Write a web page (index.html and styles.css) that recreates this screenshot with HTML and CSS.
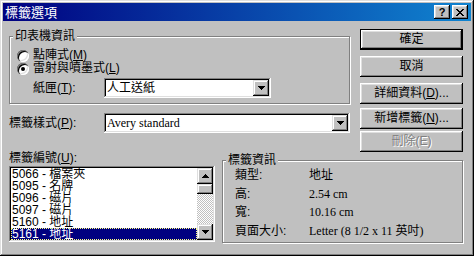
FILE: index.html
```html
<!DOCTYPE html>
<html lang="zh-Hant">
<head>
<meta charset="utf-8">
<title>標籤選項</title>
<link rel="stylesheet" href="styles.css">
</head>
<body>
<div class="window">
  <div class="titlebar">
    <span class="title">標籤選項</span>
    <div class="tb-buttons">
      <span class="tb-btn help">?</span>
      <span class="tb-btn close"><svg width="8" height="7" viewBox="0 0 8 7" shape-rendering="crispEdges"><path d="M0 0h2v1H0zM6 0h2v1H6zM1 1h2v1H1zM5 1h2v1H5zM2 2h4v1H2zM3 3h2v1H3zM2 4h4v1H2zM1 5h2v1H1zM5 5h2v1H5zM0 6h2v1H0zM6 6h2v1H6z" fill="#000"/></svg></span>
    </div>
  </div>
  <div class="content">
    <div class="row-top">
      <div class="col-left">
        <fieldset class="group printer">
          <legend>印表機資訊</legend>
          <div class="radio-row"><span class="radio"></span><span>點陣式(<u>M</u>)</span></div>
          <div class="radio-row"><span class="radio checked"></span><span>雷射與噴墨式(<u>L</u>)</span></div>
          <div class="field-row tray-row">
            <span class="field-label tray-label">紙匣(<u>T</u>):</span>
            <div class="combo tray-combo">
              <span class="combo-text">人工送紙</span>
              <span class="drop"><svg width="7" height="4" viewBox="0 0 7 4" shape-rendering="crispEdges"><path d="M0 0h7v1H0zM1 1h5v1H1zM2 2h3v1H2zM3 3h1v1H3z" fill="#000"/></svg></span>
            </div>
          </div>
        </fieldset>
        <div class="field-row style-row">
          <span class="field-label style-label">標籤樣式(<u>P</u>):</span>
          <div class="combo style-combo">
            <span class="combo-text serif">Avery standard</span>
            <span class="drop"><svg width="7" height="4" viewBox="0 0 7 4" shape-rendering="crispEdges"><path d="M0 0h7v1H0zM1 1h5v1H1zM2 2h3v1H2zM3 3h1v1H3z" fill="#000"/></svg></span>
          </div>
        </div>
      </div>
      <div class="buttons">
        <div class="btn default gap6">確定</div>
        <div class="btn gap6">取消</div>
        <div class="btn gap4">詳細資料(<u>D</u>)...</div>
        <div class="btn gap2">新增標籤(<u>N</u>)...</div>
        <div class="btn disabled">刪除(E)</div>
      </div>
    </div>
    <div class="row-bottom">
      <div class="list-col">
        <div class="list-label">標籤編號(<u>U</u>):</div>
        <div class="listbox">
          <ul class="items">
            <li>5066 - 檔案夾</li>
            <li>5095 - 名牌</li>
            <li>5096 - 磁片</li>
            <li>5097 - 磁片</li>
            <li>5160 - 地址</li>
            <li class="selected">5161 - 地址</li>
          </ul>
          <div class="vscroll">
            <span class="sb-btn"><svg width="7" height="4" viewBox="0 0 7 4" shape-rendering="crispEdges"><path d="M3 0h1v1H3zM2 1h3v1H2zM1 2h5v1H1zM0 3h7v1H0z" fill="#000"/></svg></span>
            <span class="sb-thumb"></span>
            <span class="sb-track"></span>
            <span class="sb-btn"><svg width="7" height="4" viewBox="0 0 7 4" shape-rendering="crispEdges"><path d="M0 0h7v1H0zM1 1h5v1H1zM2 2h3v1H2zM3 3h1v1H3z" fill="#000"/></svg></span>
          </div>
        </div>
      </div>
      <fieldset class="group info">
        <legend>標籤資訊</legend>
        <dl class="info-grid">
          <dt>類型:</dt><dd>地址</dd>
          <dt>高:</dt><dd>2.54 cm</dd>
          <dt>寬:</dt><dd>10.16 cm</dd>
          <dt>頁面大小:</dt><dd>Letter (8 1/2 x 11 英吋)</dd>
        </dl>
      </fieldset>
    </div>
  </div>
</div>
</body>
</html>
```

FILE: styles.css
```css
* { box-sizing: border-box; }
html, body { margin: 0; padding: 0; background: #c0c0c0; }
body {
  width: 474px;
  height: 256px;
  overflow: hidden;
  font: 12px/13px "Liberation Sans", "Noto Sans CJK TC", sans-serif;
  color: #000;
}
u { text-decoration: underline; text-underline-offset: 1px; }

.window {
  width: 474px;
  height: 256px;
  padding: 3px;
  background: #c0c0c0;
  box-shadow: inset -1px -1px #000, inset 1px 1px #dfdfdf, inset -2px -2px #808080, inset 2px 2px #fff;
}

.titlebar {
  height: 18px;
  display: flex;
  align-items: center;
  justify-content: space-between;
  padding: 0 3px 0 2px;
  background: linear-gradient(90deg, #000080 0%, #1084d0 100%);
  color: #fff;
}
.title {
  font-family: "Noto Sans CJK TC", sans-serif;
  font-size: 13px;
  line-height: 18px;
}
.tb-buttons { display: flex; gap: 2px; }
.tb-btn {
  width: 16px;
  height: 14px;
  display: flex;
  align-items: center;
  justify-content: center;
  background: #c0c0c0;
  color: #000;
  box-shadow: inset -1px -1px #000, inset 1px 1px #fff, inset -2px -2px #808080, inset 2px 2px #dfdfdf;
}
.tb-btn.help {
  font: bold 11px/14px "Liberation Sans", sans-serif;
  padding-top: 0;
}
.tb-btn svg { display: block; }

.content { padding: 8px 8px 0 6px; }

.row-top { display: flex; gap: 9px; align-items: flex-start; }
.col-left { width: 342px; }

fieldset.group {
  margin: 0;
  border: 1px solid #808080;
  box-shadow: 1px 1px #fff, inset 1px 1px #fff;
  min-width: 0;
}
fieldset.group legend {
  padding: 0 2px;
  line-height: 12px;
  background: #c0c0c0;
}

.printer {
  width: 341px;
  margin-top: 1px !important;
  padding: 7px 0 5px 7px;
}
.printer legend { margin-left: -4px; }

.radio-row {
  display: flex;
  align-items: center;
  gap: 4px;
  height: 13px;
}
.radio {
  position: relative;
  width: 12px;
  height: 12px;
  border-radius: 50%;
  background: #fff;
  box-shadow: inset 1px 1px #808080, inset 2px 2px #000, inset -1px -1px #fff, inset -2px -2px #dfdfdf;
  flex: none;
}
.radio.checked::after {
  content: "";
  position: absolute;
  left: 4px;
  top: 4px;
  width: 4px;
  height: 4px;
  border-radius: 50%;
  background: #000;
}

.field-row { display: flex; align-items: center; }
.tray-row { margin-top: 3px; padding-left: 16px; }
.tray-label { width: 71px; }
.style-row { margin-top: 9px; }
.style-label { width: 95px; }

.combo {
  height: 20px;
  display: flex;
  align-items: center;
  padding: 2px;
  background: #fff;
  box-shadow: inset -1px -1px #fff, inset 1px 1px #808080, inset -2px -2px #dfdfdf, inset 2px 2px #000;
}
.tray-combo { width: 167px; }
.style-combo { width: 246px; }
.combo-text {
  flex: 1;
  padding-left: 1px;
  line-height: 16px;
  white-space: nowrap;
}
.serif, .info-grid dd {
  font-family: "Liberation Serif", "Noto Sans CJK TC", serif;
}
.drop, .sb-btn {
  width: 16px;
  height: 16px;
  flex: none;
  display: flex;
  align-items: center;
  justify-content: center;
  background: #c0c0c0;
  box-shadow: inset -1px -1px #000, inset 1px 1px #dfdfdf, inset -2px -2px #808080, inset 2px 2px #fff;
}
.drop svg, .sb-btn svg { display: block; }

.buttons { width: 103px; display: flex; flex-direction: column; }
.btn {
  height: 21px;
  display: flex;
  align-items: center;
  justify-content: center;
  white-space: nowrap;
  background: #c0c0c0;
  box-shadow: inset -1px -1px #000, inset 1px 1px #fff, inset -2px -2px #808080, inset 2px 2px #dfdfdf;
}
.btn.default {
  box-shadow: inset 0 0 0 1px #000, inset -2px -2px #000, inset 2px 2px #fff, inset -3px -3px #808080, inset 3px 3px #dfdfdf;
}
.btn.disabled { color: #808080; text-shadow: 1px 1px #fff; }
.gap6 { margin-bottom: 6px; }
.gap4 { margin-bottom: 4px; }
.gap2 { margin-bottom: 2px; }

.row-bottom { display: flex; gap: 7px; align-items: flex-start; }
.list-col { width: 206px; }
.list-label { line-height: 13px; }
.listbox {
  margin-top: 1px;
  height: 76px;
  display: flex;
  padding: 2px;
  background: #fff;
  box-shadow: inset -1px -1px #fff, inset 1px 1px #808080, inset -2px -2px #dfdfdf, inset 2px 2px #000;
}
.items {
  flex: 1;
  margin: 0;
  padding: 0;
  list-style: none;
  overflow: hidden;
}
.items li {
  height: 12px;
  line-height: 12px;
  padding-left: 1px;
  white-space: nowrap;
}
.items li.selected {
  background: #000080;
  color: #fff;
  outline: 1px dotted #ffff80;
  outline-offset: -1px;
}
.vscroll { width: 16px; display: flex; flex-direction: column; }
.sb-thumb {
  height: 10px;
  background: #c0c0c0;
  box-shadow: inset -1px -1px #000, inset 1px 1px #dfdfdf, inset -2px -2px #808080, inset 2px 2px #fff;
}
.sb-track {
  flex: 1;
  background: repeating-conic-gradient(#c0c0c0 0 25%, #fff 0 50%) 0 0 / 2px 2px;
}

.info {
  width: 241px;
  margin-top: 2px !important;
  padding: 0 0 2px 12px;
}
.info legend { margin-left: -9px; }
.info-grid {
  margin: 0;
  display: grid;
  grid-template-columns: 74px 1fr;
  grid-auto-rows: 18.5px;
}
.info-grid dt, .info-grid dd {
  margin: 0;
  line-height: 18.5px;
  white-space: nowrap;
}
```
